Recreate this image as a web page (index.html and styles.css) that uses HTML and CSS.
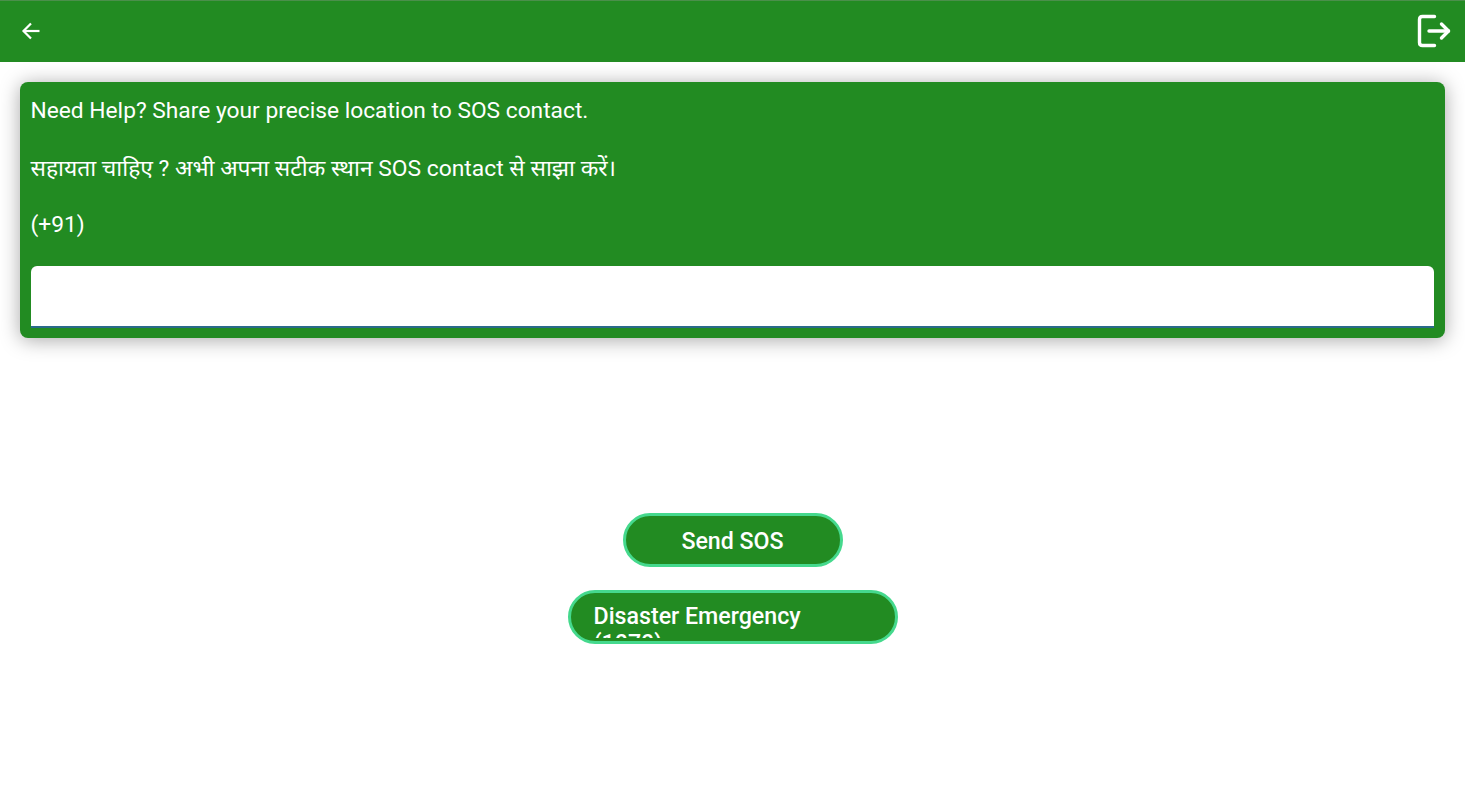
FILE: index.html
```html
<!DOCTYPE html>
<html lang="hi">
<head>
    <meta charset="UTF-8">
    <meta name="viewport" content="width=device-width, initial-scale=1.0">
    <title>Send SOS</title>
    <link rel="stylesheet" href="styles.css">
</head>
<body>
    <header class="toolbar">
        <button class="icon-btn back-btn" aria-label="Back">
            <svg width="20" height="20" viewBox="0 0 20 20" fill="none" stroke="currentColor" stroke-width="2.2">
                <path d="M18.5 10H2.5"/>
                <path d="M10 2.5L2.5 10L10 17.5"/>
            </svg>
        </button>
        <button class="icon-btn logout-btn" aria-label="Logout">
            <svg width="34" height="34" viewBox="0 0 34 34" fill="none" stroke="currentColor" stroke-width="3.4" stroke-linecap="round" stroke-linejoin="round">
                <path d="M17.5 2.5H5.5Q2.5 2.5 2.5 5.5V28.5Q2.5 31.5 5.5 31.5H17.5"/>
                <path d="M12 17H31.5"/>
                <path d="M24.5 10L31.5 17L24.5 24"/>
            </svg>
        </button>
    </header>

    <section class="card">
        <p class="card-line">Need Help? Share your precise location to SOS contact.</p>
        <p class="card-line">सहायता चाहिए ? अभी अपना सटीक स्थान SOS contact से साझा करें।</p>
        <p class="card-line">(+91)</p>
        <input class="phone-input" type="text">
    </section>

    <div class="actions">
        <button class="pill pill-sos"><span class="pill-label">Send SOS</span></button>
        <button class="pill pill-disaster"><span class="pill-text">Disaster Emergency (1070)</span></button>
    </div>
</body>
</html>
```

FILE: styles.css
```css
body {
    margin: 0;
    background-color: #fff;
    font-family: Roboto, "Noto Sans", sans-serif;
    color: #fff;
}

.toolbar {
    height: 62px;
    box-sizing: border-box;
    padding: 0 14px 1px 21px;
    display: flex;
    align-items: center;
    justify-content: space-between;
    border-top: 1px solid #4b8f4b;
    background-color: #228b22;
}

.icon-btn {
    display: flex;
    padding: 0;
    border: none;
    background: none;
    color: #fff;
}

.card {
    margin: 20px 20px 0;
    height: 256px;
    box-sizing: border-box;
    padding: 15px 11px 10px 10.5px;
    display: flex;
    flex-direction: column;
    border-radius: 8px;
    background-color: #228b22;
    box-shadow: 0 2px 20px rgba(0, 0, 0, 0.35);
}

.card-line {
    margin: 0 0 31px;
    font-size: 22.75px;
    line-height: 27px;
}

.card-line:nth-of-type(2) {
    margin-bottom: 29px;
    font-size: 22.85px;
}

.card-line:nth-of-type(3) {
    margin-bottom: 0;
}

.phone-input {
    margin-top: auto;
    height: 62px;
    box-sizing: border-box;
    border: none;
    border-bottom: 2px solid #2a6a8a;
    border-radius: 6px 6px 0 0;
    background-color: #fff;
    outline: none;
}

.actions {
    margin-top: 175px;
    display: flex;
    flex-direction: column;
    align-items: center;
    gap: 23px;
}

.pill {
    height: 54px;
    box-sizing: border-box;
    border: 3px solid #45d98d;
    border-radius: 27px;
    background-color: #228b22;
    color: #fff;
    font-family: Roboto, sans-serif;
    font-size: 23.2px;
    font-weight: 500;
    line-height: 27px;
}

.pill-sos {
    width: 220px;
    padding: 0;
}

.pill-label {
    display: block;
    padding-top: 3px;
}

.pill-disaster {
    width: 330px;
    padding: 0 24px 0 23px;
    text-align: left;
    overflow: hidden;
}

.pill-text {
    display: block;
    height: 45px;
    margin-bottom: 3px;
    padding-top: 10px;
    box-sizing: border-box;
    overflow: hidden;
}
```
